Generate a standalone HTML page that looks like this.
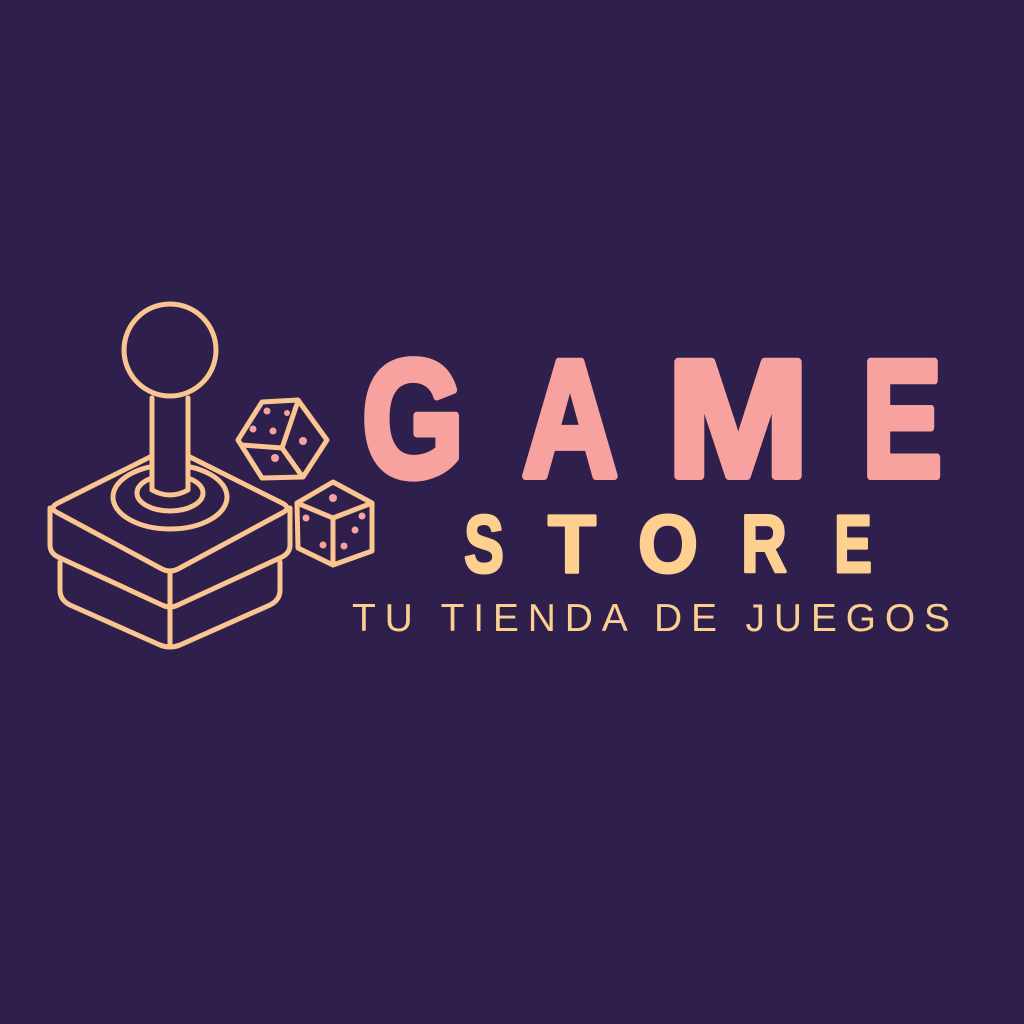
<!DOCTYPE html>
<html><head><meta charset="utf-8"><style>
html,body{margin:0;padding:0;background:#2f1f4d;}
svg{display:block}
</style></head><body>
<svg width="1024" height="1024" viewBox="0 0 1024 1024" xmlns="http://www.w3.org/2000/svg">
<rect width="1024" height="1024" fill="#2f1f4d"/>
<g fill="none" stroke="#fbc58f" stroke-width="5" stroke-linejoin="round" stroke-linecap="round">
  <path d="M60 562 L60 590 Q60 600 70 605 L160 645 Q170 649 180 645 L270 605 Q280 600 280 590 L280 562"/>
  <path d="M170 608 L170 645"/>
  <path d="M50 508 L50 545 Q50 553 58 557 L162 605 Q170 609 178 605 L282 557 Q290 553 290 545 L290 508"/>
  <path d="M170 573 L170 607"/>
  <path d="M58 503 L162 451 Q170 447 178 451 L282 503 Q292 508 282 513 L178 569 Q170 573 162 569 L58 513 Q48 508 58 503 Z"/>
  <ellipse cx="170" cy="497" rx="57" ry="32"/>
  <ellipse cx="170" cy="493" rx="33" ry="18"/>
  <path d="M152 398 L152 490 Q170 500 188 490 L188 398" fill="#2f1f4d"/>
  <circle cx="170" cy="350" r="46"/>
  <!-- die 1 -->
  <path d="M238 440 L262 402 L298 400 L327 440 L303 477 L262 478 Z"/>
  <path d="M242 445 L282 448 L298 401 M282 448 L302 476"/>
  <!-- die 2 -->
  <path d="M333 482 L372 503 L372 551 L333 565 L298 548 L297 503 Z"/>
  <path d="M297 503 L333 518 L372 503 M333 518 L333 565"/>
</g>
<g fill="#f5a3a0">
  <circle cx="267" cy="411" r="3.5"/><circle cx="287" cy="413" r="3"/><circle cx="253" cy="429" r="3.5"/><circle cx="273" cy="431" r="3.5"/><circle cx="303" cy="441" r="4"/><circle cx="275" cy="458" r="4"/>
  <circle cx="333" cy="498" r="4"/><circle cx="306" cy="518" r="3.5"/><circle cx="362" cy="516" r="3.5"/><circle cx="355" cy="530" r="3.5"/><circle cx="323" cy="545" r="3.5"/><circle cx="344" cy="546" r="3.5"/>
</g>
<g font-family="Liberation Sans, sans-serif" font-weight="bold" fill="#f8a2a0" stroke="#f8a2a0" stroke-width="8" stroke-linejoin="round" font-size="166">
  <text x="362" y="476" textLength="102" lengthAdjust="spacingAndGlyphs">G</text>
  <text x="522" y="476" textLength="96" lengthAdjust="spacingAndGlyphs">A</text>
  <text x="667" y="476" textLength="142" lengthAdjust="spacingAndGlyphs">M</text>
  <text x="862" y="476" textLength="80" lengthAdjust="spacingAndGlyphs">E</text>
</g>
<g font-family="Liberation Sans, sans-serif" font-weight="bold" fill="#fdd08f" stroke="#fdd08f" stroke-width="3" stroke-linejoin="round" font-size="82">
  <text x="464" y="572" textLength="40" lengthAdjust="spacingAndGlyphs">S</text>
  <text x="548" y="572" textLength="48" lengthAdjust="spacingAndGlyphs">T</text>
  <text x="638" y="572" textLength="60" lengthAdjust="spacingAndGlyphs">O</text>
  <text x="741" y="572" textLength="46" lengthAdjust="spacingAndGlyphs">R</text>
  <text x="834" y="572" textLength="38" lengthAdjust="spacingAndGlyphs">E</text>
</g>
<text x="352" y="631" font-family="Liberation Sans, sans-serif" font-size="39" fill="#fbd08e" textLength="598" lengthAdjust="spacing">TU TIENDA DE JUEGOS</text>
</svg>
</body></html>
